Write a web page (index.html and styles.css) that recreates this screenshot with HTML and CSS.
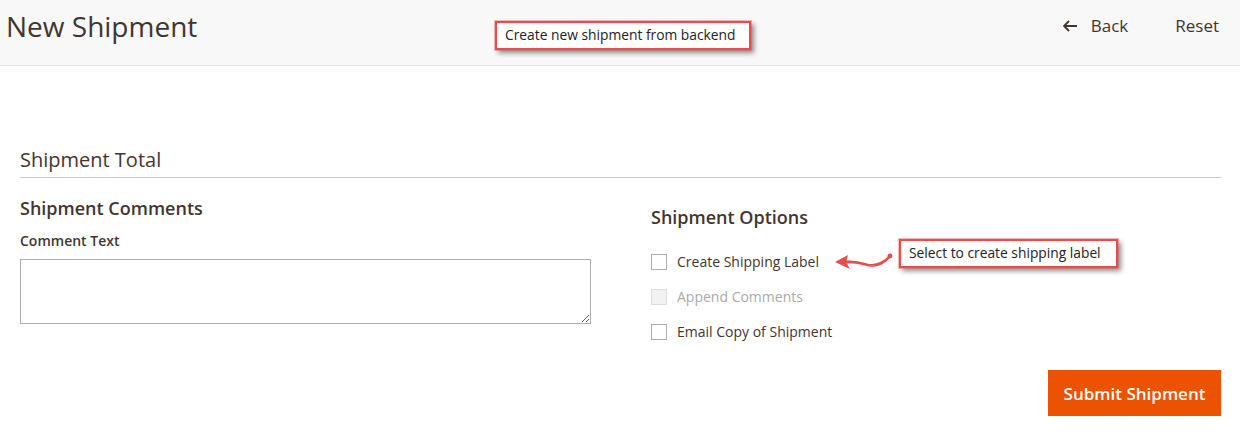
FILE: index.html
```html
<!DOCTYPE html>
<html>
<head>
<meta charset="utf-8">
<link rel="stylesheet" href="styles.css">
</head>
<body>
<header class="page-header">
  <h1 class="page-title">New Shipment</h1>
  <div class="note note-header">Create new shipment from backend</div>
  <nav class="header-actions">
    <a class="action back">
      <svg class="back-icon" width="14" height="12" viewBox="0 0 14 12"><path d="M6 1 L1 6 L6 11 M1 6 H14" fill="none" stroke="#41362f" stroke-width="1.8"/></svg>
      Back
    </a>
    <a class="action reset">Reset</a>
  </nav>
</header>
<main class="content">
  <h2 class="section-title">Shipment Total</h2>
  <div class="columns">
    <div class="col-left">
      <h3 class="block-title">Shipment Comments</h3>
      <label class="field-label">Comment Text</label>
      <textarea class="comment-box"></textarea>
    </div>
    <div class="col-right">
      <h3 class="block-title options-title">Shipment Options</h3>
      <ul class="options">
        <li class="option">
          <span class="checkbox"></span>
          <span class="opt-label">Create Shipping Label</span>
          <svg class="arrow" width="60" height="22" viewBox="0 0 60 22"><path d="M56 4 C52 9 44 15 34 13 C26 11 20 9 12 10" fill="none" stroke="#e84c4c" stroke-width="2.8" stroke-linecap="round"/><circle cx="56" cy="4" r="2.4" fill="#e84c4c"/><path d="M1 10 L14 3 L12 10 L16 17 Z" fill="#e84c4c"/></svg>
          <div class="note note-option">Select to create shipping label</div>
        </li>
        <li class="option disabled">
          <span class="checkbox"></span>
          <span class="opt-label">Append Comments</span>
        </li>
        <li class="option">
          <span class="checkbox"></span>
          <span class="opt-label">Email Copy of Shipment</span>
        </li>
      </ul>
    </div>
  </div>
  <div class="actions">
    <button class="submit">Submit Shipment</button>
  </div>
</main>
</body>
</html>
```
FILE: styles.css
```css
* { box-sizing: border-box; }
body {
  margin: 0;
  font-family: "Open Sans", "Noto Sans", sans-serif;
  color: #41362f;
  background: #fff;
}
.page-header {
  position: relative;
  height: 66px;
  background: #f8f8f8;
  border-bottom: 1px solid #e3e3e3;
  display: flex;
  align-items: flex-start;
  justify-content: space-between;
  padding: 0 21px 0 6px;
}
.page-title {
  margin: 7px 0 0 0;
  font-size: 28px;
  font-weight: 400;
  line-height: 38px;
  color: #41362f;
}
.note {
  background: #fff;
  border: 2px solid #e84c4c;
  outline: 1px solid rgba(232,76,76,0.35);
  box-shadow: 3px 3px 5px rgba(0,0,0,0.45);
  font-family: "Open Sans", "Noto Sans", sans-serif;
  font-size: 13.8px;
  color: #222;
  line-height: 24px;
  padding: 0 8px;
  white-space: nowrap;
}
.note-header {
  position: absolute;
  left: 495px;
  top: 21px;
  width: 256px;
  height: 29px;
}
.header-actions {
  display: flex;
  gap: 47px;
  margin-top: 15px;
  font-size: 17px;
  line-height: 22px;
}
.action {
  display: flex;
  align-items: center;
  color: #41362f;
}
.back-icon { margin-right: 14px; }
.content {
  padding: 0 19px 0 20px;
}
.section-title {
  margin: 80px 0 0 0;
  font-size: 20px;
  font-weight: 400;
  line-height: 28px;
  padding-bottom: 3px;
  border-bottom: 1px solid #cccccc;
}
.columns {
  display: grid;
  grid-template-columns: 571px 1fr;
  column-gap: 60px;
}
.block-title {
  margin: 0;
  font-size: 18px;
  font-weight: 600;
  line-height: 24px;
}
.col-left .block-title { margin-top: 18px; }
.options-title { margin-top: 27px; }
.field-label {
  display: block;
  margin-top: 11px;
  font-size: 14px;
  font-weight: 600;
  line-height: 20px;
}
.comment-box {
  display: block;
  margin-top: 8px;
  width: 571px;
  height: 65px;
  border: 1px solid #adadad;
  border-radius: 0;
  resize: vertical;
}
.options {
  list-style: none;
  margin: 15px 0 0 0;
  padding: 0;
}
.option {
  position: relative;
  display: flex;
  align-items: center;
  height: 35px;
  font-size: 14px;
  color: #41362f;
}
.checkbox {
  width: 16px;
  height: 16px;
  border: 1px solid #adadad;
  background: #fff;
  margin-right: 10px;
}
.option.disabled .checkbox { border-color: #ddd; background: #f2f2f2; }
.option.disabled .opt-label { color: #aaa; }
.arrow {
  position: absolute;
  left: 183px;
  top: 8px;
}
.note-option {
  position: absolute;
  left: 248px;
  top: -5px;
  width: 219px;
  height: 29px;
}
.actions {
  display: flex;
  justify-content: flex-end;
  margin-top: 21px;
}
.submit {
  background: #eb5202;
  border: none;
  color: #fff;
  font-family: "Open Sans", "Noto Sans", sans-serif;
  font-size: 17px;
  font-weight: 600;
  width: 173px;
  height: 46px;
  padding: 0;
}
```
